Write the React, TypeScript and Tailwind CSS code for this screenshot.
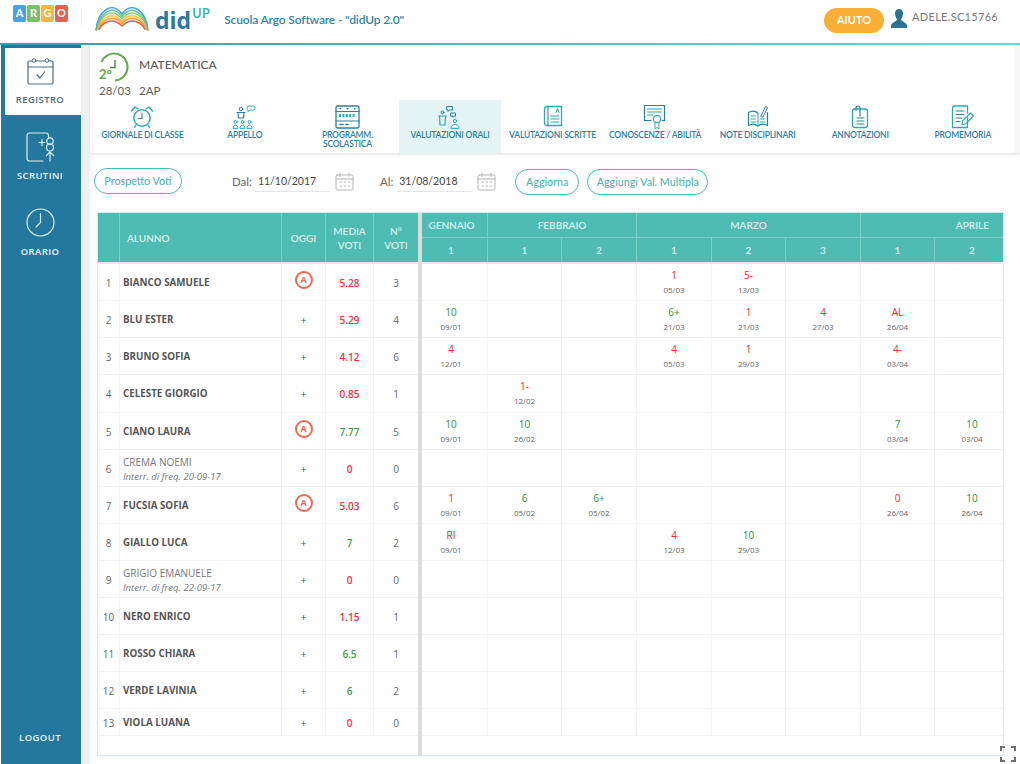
type Mark = { col: number; v: string; d: string; ok?: boolean };
type Row = {
  n: number;
  name: string;
  note?: string;
  absent?: boolean;
  avg: string;
  good?: boolean;
  count: number;
  h: number;
  marks: Mark[];
};

const rows: Row[] = [
  { n: 1, name: "BIANCO SAMUELE", absent: true, avg: "5.28", count: 3, h: 37, marks: [{ col: 3, v: "1", d: "05/03" }, { col: 4, v: "5-", d: "13/03" }] },
  { n: 2, name: "BLU ESTER", avg: "5.29", count: 4, h: 37, marks: [{ col: 0, v: "10", d: "09/01", ok: true }, { col: 3, v: "6+", d: "21/03", ok: true }, { col: 4, v: "1", d: "21/03" }, { col: 5, v: "4", d: "27/03" }, { col: 6, v: "AL", d: "26/04" }] },
  { n: 3, name: "BRUNO SOFIA", avg: "4.12", count: 6, h: 37, marks: [{ col: 0, v: "4", d: "12/01" }, { col: 3, v: "4", d: "05/03" }, { col: 4, v: "1", d: "29/03" }, { col: 6, v: "4-", d: "03/04" }] },
  { n: 4, name: "CELESTE GIORGIO", avg: "0.85", count: 1, h: 38, marks: [{ col: 1, v: "1-", d: "12/02" }] },
  { n: 5, name: "CIANO LAURA", absent: true, avg: "7.77", good: true, count: 5, h: 37, marks: [{ col: 0, v: "10", d: "09/01", ok: true }, { col: 1, v: "10", d: "26/02", ok: true }, { col: 6, v: "7", d: "03/04", ok: true }, { col: 7, v: "10", d: "03/04", ok: true }] },
  { n: 6, name: "CREMA NOEMI", note: "Interr. di freq. 20-09-17", avg: "0", count: 0, h: 37, marks: [] },
  { n: 7, name: "FUCSIA SOFIA", absent: true, avg: "5.03", count: 6, h: 37, marks: [{ col: 0, v: "1", d: "09/01" }, { col: 1, v: "6", d: "05/02", ok: true }, { col: 2, v: "6+", d: "05/02", ok: true }, { col: 6, v: "0", d: "26/04" }, { col: 7, v: "10", d: "26/04", ok: true }] },
  { n: 8, name: "GIALLO LUCA", avg: "7", good: true, count: 2, h: 37, marks: [{ col: 0, v: "RI", d: "09/01" }, { col: 3, v: "4", d: "12/03" }, { col: 4, v: "10", d: "29/03", ok: true }] },
  { n: 9, name: "GRIGIO EMANUELE", note: "Interr. di freq. 22-09-17", avg: "0", count: 0, h: 37, marks: [] },
  { n: 10, name: "NERO ENRICO", avg: "1.15", count: 1, h: 37, marks: [] },
  { n: 11, name: "ROSSO CHIARA", avg: "6.5", good: true, count: 1, h: 37, marks: [] },
  { n: 12, name: "VERDE LAVINIA", avg: "6", good: true, count: 2, h: 37, marks: [] },
  { n: 13, name: "VIOLA LUANA", avg: "0", count: 0, h: 27, marks: [] },
];

const colWidths = ["w-[66px] pr-[7px]", "w-[74px]", "w-[75px]", "w-[75px]", "w-[74px]", "w-[75px]", "w-[74px]", "w-[67px] pl-[7px]"];
const subNumbers = ["1", "1", "2", "1", "2", "3", "1", "2"];

function Svg({ w, h, children, className }: { w: number; h: number; children: React.ReactNode; className?: string }) {
  return (
    <svg width={w} height={h} viewBox={`0 0 ${w} ${h}`} fill="none" strokeLinecap="round" strokeLinejoin="round" className={className}>
      {children}
    </svg>
  );
}

function Rainbow() {
  const colors = ["#3f9fd0", "#53bfb4", "#8cc763", "#f5c33b", "#f39a3d", "#e8604c"];
  return (
    <Svg w={54} h={28}>
      {colors.map((c, i) => (
        <path
          key={c}
          d={`M${1 + i * 0.7} ${27 - i * 0.2} C${3 + i * 0.7} ${8 + i * 2.5} ${17} ${-3 + i * 3.2} 27 ${11 + i * 2.4} C37 ${-3 + i * 3.2} ${51 - i * 0.7} ${8 + i * 2.5} ${53 - i * 0.7} ${27 - i * 0.2}`}
          stroke={c}
          strokeWidth={1.5}
        />
      ))}
    </Svg>
  );
}

function NavIcon({ name }: { name: string }) {
  const a = "#2fa9b5";
  const b = "#2b7f9e";
  if (name === "alarm")
    return (
      <Svg w={24} h={24}>
        <circle cx="12" cy="13" r="8.2" stroke={a} strokeWidth="1.4" />
        <path d="M12 8v5.5H8.5" stroke={b} strokeWidth="1.1" />
        <path d="M1.5 6 5 2l3 2M22.5 6 19 2l-3 2M6 20l-1.5 2.5M18 20l1.5 2.5" stroke={a} strokeWidth="1.4" />
      </Svg>
    );
  if (name === "people")
    return (
      <Svg w={26} h={24}>
        <circle cx="9" cy="4" r="1.8" stroke={b} />
        <path d="M5 7.5h8M6 7.5 6.5 13h5l.5-5.5" stroke={b} strokeWidth="1.2" />
        <path d="M15 2.5c0-1 1-1.5 2-1.5h4c1 0 2 .5 2 1.5v1c0 1-1 1.5-2 1.5h-3l-2 1.5V5c-.6-.3-1-.7-1-1.5z" stroke={a} />
        <circle cx="3.5" cy="17" r="1.5" stroke={a} />
        <circle cx="10.5" cy="17" r="1.5" stroke={a} />
        <circle cx="17.5" cy="17" r="1.5" stroke={a} />
        <path d="M1 23c0-4 5-4 5 0zM8 23c0-4 5-4 5 0zM15 23c0-4 5-4 5 0z" stroke={a} />
      </Svg>
    );
  if (name === "abacus")
    return (
      <Svg w={25} h={24}>
        <rect x="1" y="1" width="23" height="22" rx="1.5" stroke={b} strokeWidth="1.3" />
        <path d="M1 6.5h23M1 16h23" stroke={b} />
        <path d="M4 10.5h17" stroke={a} strokeWidth="3" strokeDasharray="2 1.4" strokeLinecap="butt" />
        <path d="M5 3.8h.5M12.3 3.8h.5M19.5 3.8h.5M5 19.5h3M11 19.5h2" stroke={b} strokeWidth="1.6" />
      </Svg>
    );
  if (name === "oral")
    return (
      <Svg w={26} h={24}>
        <circle cx="5.5" cy="7.5" r="1.5" stroke={b} />
        <path d="M1.5 11h8M2.5 11 3 20h5l.5-9" stroke={a} strokeWidth="1.2" />
        <path d="M10 1.5h5.5v3.5h-3L11 6.5V5h-1zM14 8h4.5v3.2H17l-1 1.2v-1.2h-2z" stroke={b} />
        <circle cx="18" cy="16" r="1.6" stroke={a} />
        <path d="M14 23c0-5 8-5 8 0z" stroke={a} />
      </Svg>
    );
  if (name === "book")
    return (
      <Svg w={20} h={24}>
        <path d="M4 1.5h14.5v19H4C2.5 20.5 1.5 19.5 1.5 18V4C1.5 2.5 2.5 1.5 4 1.5z" stroke={a} strokeWidth="1.3" />
        <path d="M5 1.5v19" stroke={b} />
        <path d="M8 11h8M8 14h8M8 17h8" stroke={a} />
        <path d="M13 7.5l1.5-4 1.5 4" stroke={b} strokeWidth=".9" />
      </Svg>
    );
  if (name === "cert")
    return (
      <Svg w={24} h={26}>
        <path d="M8 16.5H1.5v-15h20v15H19" stroke={b} strokeWidth="1.2" />
        <path d="M4.500 5h14M4.500 8h14M4.500 11h6" stroke={a} />
        <circle cx="14" cy="15" r="3.6" stroke={a} strokeWidth="1.2" />
        <path d="M12 18.500V25l2-1.500 2 1.500v-6.500" stroke={a} />
      </Svg>
    );
  if (name === "note")
    return (
      <Svg w={24} h={24}>
        <path d="M12 8C9 5.500 5 6 2.500 7.500v13c2.500-1.500 6.500-2 9.500.5 3-2.500 7-2 9.500-.5v-13" stroke={b} strokeWidth="1.2" />
        <path d="M12 8v13M5 11h4.500M5 14h4.500M5 17h4.500M14.500 14h4.500M14.500 17h4.500" stroke={a} />
        <path d="M15 11 19.500 1.500l2 1L17 12z" stroke={b} />
      </Svg>
    );
  if (name === "clip")
    return (
      <Svg w={18} h={24}>
        <rect x="1.5" y="4" width="15" height="18.5" rx="2.5" stroke={a} strokeWidth="1.3" />
        <path d="M5 5.500V2.500C5 1.500 6 1 7 1s2 .5 2 1.500V11" stroke={b} strokeWidth="1.2" />
        <path d="M6 13h7M6 16h7M6 19h7" stroke={b} />
      </Svg>
    );
  return (
    <Svg w={24} h={24}>
      <path d="M16.500 13v9.500h-15V3.500C1.500 2 2.500 1 4 1h12.500v7" stroke={a} strokeWidth="1.3" />
      <path d="M5 6h8M5 9.500h8M5 13h6M5 16.500h4" stroke={b} />
      <path d="M11 19.500l.5-3.500L19.500 8l3 3-8 8z" stroke={a} strokeWidth="1.1" />
    </Svg>
  );
}

const navItems = [
  { icon: "alarm", label: "GIORNALE DI CLASSE" },
  { icon: "people", label: "APPELLO" },
  { icon: "abacus", label: "PROGRAMM. SCOLASTICA", two: true },
  { icon: "oral", label: "VALUTAZIONI ORALI", active: true },
  { icon: "book", label: "VALUTAZIONI SCRITTE" },
  { icon: "cert", label: "CONOSCENZE / ABILITÀ" },
  { icon: "note", label: "NOTE DISCIPLINARI" },
  { icon: "clip", label: "ANNOTAZIONI" },
  { icon: "memo", label: "PROMEMORIA" },
];

function CalendarIcon() {
  return (
    <Svg w={19} h={19}>
      <rect x="1" y="3" width="17" height="15" rx="1.5" stroke="#b5b5b5" />
      <path d="M1 7h17M5 1v3.500M14 1v3.500" stroke="#b5b5b5" />
      <path d="M5 10h1.500M9 10h1.500M13 10h1.500M5 14h1.500M9 14h1.500M13 14h1.500" stroke="#b5b5b5" />
    </Svg>
  );
}

function OutlineButton({ label, width }: { label: string; width: string }) {
  return (
    <button className={`${width} h-[26px] rounded-full border-[1.5px] border-[#4dbdb5] bg-white text-[10.7px] font-medium text-[#4fb7ae]`}>
      {label}
    </button>
  );
}

function SideItem({ label, active, icon }: { label: string; active?: boolean; icon: React.ReactNode }) {
  return (
    <div className={`flex flex-col items-center ${active ? "ml-1 h-[67px] bg-white pr-[6px] pt-[9px] text-[#4c6a7c]" : "h-[76px] pr-[2px] pt-[17px] text-[#e6f1f5]"}`}>
      <div className={active ? "h-[28px]" : "h-[30px]"}>{icon}</div>
      <span className={`${active ? "mt-[8px]" : "mt-[7px]"} font-['Open_Sans',sans-serif] text-[9.5px] font-semibold tracking-[0.4px]`}>{label}</span>
    </div>
  );
}

function HeadCell({ className, children }: { className: string; children: React.ReactNode }) {
  return (
    <div className={`flex items-center justify-center border-r border-[#7ecdc6] text-center text-[10px] font-semibold leading-[14px] text-[#d6efec] ${className}`}>
      {children}
    </div>
  );
}

function AbsentBadge() {
  return (
    <span className="mt-[-6px] flex h-[18px] w-[18px] items-center justify-center rounded-full border-2 border-[#ec6a4f] text-[9px] font-bold text-[#ec6a4f]">
      A
    </span>
  );
}

export default function App() {
  return (
    <div className="flex h-[764px] w-[1020px] flex-col overflow-hidden bg-white font-['Lato',sans-serif]">
      <header className="flex h-[43px] shrink-0 items-center pl-[13px] pr-[22px]">
        <div className="flex gap-[1px] pb-[17px] pt-[1px]">
          {[
            ["A", "bg-[#4aa3e0]"],
            ["R", "bg-[#7cc06a]"],
            ["G", "bg-[#f6b73c]"],
            ["O", "bg-[#e8604c]"],
          ].map(([l, c]) => (
            <span key={l} className={`flex h-[17px] w-[13px] items-center justify-center rounded-[2px] text-[11px] font-bold text-white ${c}`}>
              {l}
            </span>
          ))}
        </div>
        <div className="ml-[13px] mb-[10px] h-[16px] w-px bg-[#eeeeee]" />
        <div className="ml-[13px] mb-[10px]">
          <Rainbow />
        </div>
        <div className="ml-[6px] mt-[2px] mb-[4px] flex items-start">
          <span className="font-['Open_Sans',sans-serif] text-[23px] font-bold leading-none text-[#2a7a9f]">did</span>
          <span className="ml-[1px] mt-[-2px] text-[12.5px] font-bold leading-[14px] tracking-[0.5px] text-[#3fb5bd]">UP</span>
        </div>
        <span className="ml-[14px] mb-[3px] text-[12px] font-semibold tracking-[-0.15px] text-[#2a86a3]">Scuola Argo Software - "didUp 2.0"</span>
        <button className="ml-auto mb-[3px] h-[25px] w-[60px] rounded-full bg-[#f9ae36] text-[11px] font-bold text-white">AIUTO</button>
        <svg width="16" height="19" viewBox="0 0 16 19" className="ml-[7px] mb-[6px]">
          <path d="M8 0c2.600 0 4 2 4 4.500S10.800 9 10 10.500c0 1.500 5.500 3 6 6V19H0v-2.500c.5-3 6-4.500 6-6C5.200 9 4 7 4 4.500S5.400 0 8 0z" fill="#2b7396" />
        </svg>
        <span className="ml-[5px] mb-[8px] text-[11px] tracking-[0.3px] text-[#777777]">ADELE.SC15766</span>
      </header>
      <div className="h-[2px] shrink-0 bg-gradient-to-r from-[#3d9bb0] to-[#5fdcd4]" />

      <div className="flex min-h-0 flex-1">
        <aside className="ml-px flex w-[80px] shrink-0 flex-col bg-[#24789e] pt-[3px]">
          <SideItem
            label="REGISTRO"
            active
            icon={
              <Svg w={27} h={28}>
                <rect x="1" y="4" width="25" height="23" rx="1.5" stroke="#4c6a7c" strokeWidth="1.2" />
                <path d="M1 10h25" stroke="#4c6a7c" />
                <circle cx="7" cy="3.5" r="1.8" stroke="#4c6a7c" fill="#fff" />
                <circle cx="20" cy="3.5" r="1.8" stroke="#4c6a7c" fill="#fff" />
                <path d="m10 18 3 3 4.500-6" stroke="#4c6a7c" strokeWidth="1.2" />
              </Svg>
            }
          />
          <SideItem
            label="SCRUTINI"
            icon={
              <svg width="29" height="30" viewBox="0 0 29 30" fill="none" stroke="#dcebf1" strokeWidth="1.2" strokeLinecap="round" strokeLinejoin="round">
                <path d="M17 29H3.500C2 29 1 28 1 26.500V3.500C1 2 2 1 3.500 1H20c1.500 0 2.500 1 2.500 2.500V6" />
                <path d="M13 10.500h6M16 7.500v6" />
                <circle cx="24" cy="9" r="3.200" />
                <circle cx="24" cy="15.500" r="3.500" />
                <path d="M24 29v-9M20.500 23.500l3.500-3.500 3.500 3.500" />
              </svg>
            }
          />
          <SideItem
            label="ORARIO"
            icon={
              <svg width="29" height="29" viewBox="0 0 29 29" fill="none" stroke="#dcebf1" strokeWidth="1.2" strokeLinecap="round">
                <circle cx="14.5" cy="14.5" r="13.5" />
                <path d="M14.500 5.500v9L10 19" />
              </svg>
            }
          />
          <div className="mt-auto pb-[19px] pr-[2px] text-center font-['Open_Sans',sans-serif] text-[9.5px] font-semibold tracking-[0.4px] text-[#e6f1f5]">LOGOUT</div>
        </aside>
        <div className="w-[9px] shrink-0 bg-[#f0f0f0]" />

        <main className="relative flex min-w-0 flex-1 flex-col">
          <section className="flex h-[108px] shrink-0 flex-col border-r-[6px] border-[#f6f6f6] pl-[1px] shadow-[0_2px_2px_rgba(0,0,0,0.09)]">
            <div className="flex h-[55px] pl-[8px] pt-[7px] text-[#5b5b5b]">
              <div className="w-[40px]">
                <svg width="30" height="30" viewBox="0 0 30 30" fill="none" stroke="#63ab4b" strokeWidth="2" className="overflow-visible">
                  <path d="M2.500 10A13.500 13.500 0 1 1 16 28.500" />
                  <path d="M16 8v7.500h-5" strokeWidth="1.4" stroke="#4d8a3b" />
                  <text x="0" y="27" fill="#63ab4b" stroke="none" fontSize="13" fontWeight="700" fontFamily="Lato, sans-serif">2°</text>
                </svg>
              </div>
              <div className="pt-[3px] text-[12px] font-medium leading-[20px]">MATEMATICA</div>
            </div>
            <div className="flex h-[0px] pl-[8px] text-[11.5px] leading-[14px] text-[#5b5b5b]">
              <span className="mt-[-16px] w-[40px]">28/03</span>
              <span className="mt-[-16px]">2AP</span>
            </div>
            <nav className="mt-0 flex h-[53px]">
              {navItems.map((item) => (
                <div key={item.label} className={`flex min-w-0 flex-1 flex-col items-center pt-[4px] ${item.active ? "bg-[#e4f3f3]" : ""}`}>
                  <div className="flex h-[25px] items-center">
                    <NavIcon name={item.icon} />
                  </div>
                  <span className={`${item.two ? "w-[60px]" : "whitespace-nowrap"} mt-[2px] text-center text-[8.5px] font-semibold leading-[9px] tracking-[-0.2px] text-[#2b7f9e]`}>
                    {item.label}
                  </span>
                </div>
              ))}
            </nav>
          </section>

          <div className="flex h-[59px] shrink-0 items-start pl-[4px] pt-[15px]">
            <OutlineButton label="Prospetto Voti" width="w-[88px]" />
            <label className="ml-[50px] mt-[5px] text-[11.5px] text-[#666666]">Dal:</label>
            <span className="ml-[3px] w-[75px] border-b border-[#e3e6e8] pb-[1px] pl-[3px] pt-[6px] text-[10.5px] text-[#444444]">11/10/2017</span>
            <span className="ml-[5px] mt-[4px]"><CalendarIcon /></span>
            <label className="ml-[26px] mt-[5px] text-[11.5px] text-[#666666]">Al:</label>
            <span className="ml-[4px] w-[75px] border-b border-[#e3e6e8] pb-[1px] pl-[2px] pt-[6px] text-[10.5px] text-[#444444]">31/08/2018</span>
            <span className="ml-[5px] mt-[4px]"><CalendarIcon /></span>
            <span className="ml-[19px]"><OutlineButton label="Aggiorna" width="w-[64px]" /></span>
            <span className="ml-[8px]"><OutlineButton label="Aggiungi Val. Multipla" width="w-[121px]" /></span>
          </div>

          <div className="ml-[7px] flex h-[544px] w-[907px] shrink-0 border border-[#d9e9f2]">
            <div className="w-[324px] shrink-0 border-r-[4px] border-[#dcdcdc]">
              <div className="flex h-[49px] bg-[#4fbcb4]">
                <HeadCell className="w-[22px]"> </HeadCell>
                <HeadCell className="w-[162px] !justify-start pl-[7px]">ALUNNO</HeadCell>
                <HeadCell className="w-[44px]">OGGI</HeadCell>
                <HeadCell className="w-[48px]">MEDIA<br />VOTI</HeadCell>
                <HeadCell className="w-[44px] border-r-0">N°<br />VOTI</HeadCell>
              </div>
              <div className="h-[2px] bg-[#e8e8e8]" />
              {rows.map((r) => (
                <div key={r.n} style={{ height: r.h }} className="flex border-b border-[#f0f2f4] font-['Open_Sans',sans-serif] text-[10px] text-[#666666]">
                  <div className="flex w-[22px] items-center justify-center border-r border-[#f0f2f4] pt-[2px]">{r.n}</div>
                  <div className="flex w-[162px] flex-col justify-center border-r border-[#f0f2f4] pl-[3px] pt-[2px]">
                    {r.note ? (
                      <>
                        <span className="leading-[14px] text-[#777777]">{r.name}</span>
                        <span className="text-[9.5px] italic leading-[15px] text-[#777777]">{r.note}</span>
                      </>
                    ) : (
                      <span className="text-[9.8px] font-bold text-[#555555]">{r.name}</span>
                    )}
                  </div>
                  <div className="flex w-[44px] items-center justify-center border-r border-[#f0f2f4] pt-[2px] text-[#555555]">
                    {r.absent ? <AbsentBadge /> : "+"}
                  </div>
                  <div className={`flex w-[48px] items-center justify-center border-r border-[#f0f2f4] pt-[2px] font-semibold ${r.good ? "text-[#3f9f45]" : "text-[#f0304a]"}`}>
                    {r.avg}
                  </div>
                  <div className="flex w-[44px] items-center justify-center pt-[2px]">{r.count}</div>
                </div>
              ))}
            </div>

            <div className="min-w-0 flex-1">
              <div className="flex h-[25px] bg-[#4fbcb4] text-[10px] font-semibold text-[#d6efec]">
                <div className="flex w-[66px] items-center justify-center border-b border-r border-[#7ecdc6] pr-[6px]">GENNAIO</div>
                <div className="flex w-[149px] items-center justify-center border-b border-r border-[#7ecdc6]">FEBBRAIO</div>
                <div className="flex w-[224px] items-center justify-center border-r border-b border-[#7ecdc6]">MARZO</div>
                <div className="flex flex-1 items-center justify-end border-b border-[#7ecdc6] pr-[14px]">APRILE</div>
              </div>
              <div className="flex h-[24px] bg-[#4fbcb4] text-[10px] font-semibold text-[#d6efec]">
                {subNumbers.map((n, i) => (
                  <div key={i} className={`flex items-center justify-center border-r border-[#7ecdc6] last:border-r-0 ${colWidths[i]}`}>{n}</div>
                ))}
              </div>
              <div className="h-[2px] bg-[#e8e8e8]" />
              {rows.map((r) => (
                <div key={r.n} style={{ height: r.h }} className="flex border-b border-[#f0f2f4]">
                  {colWidths.map((w, i) => {
                    const mark = r.marks.find((m) => m.col === i);
                    return (
                      <div key={i} className={`flex flex-col items-center border-r border-[#f0f2f4] pt-[4px] font-['Open_Sans',sans-serif] last:border-r-0 ${w}`}>
                        {mark && (
                          <>
                            <span className={`text-[10px] font-medium leading-[14px] ${mark.ok ? "text-[#2f8f3a]" : "text-[#f2282f]"}`}>{mark.v}</span>
                            <span className="text-[8px] leading-[15px] text-[#666666]">{mark.d}</span>
                          </>
                        )}
                      </div>
                    );
                  })}
                </div>
              ))}
            </div>
          </div>

          <svg width="16" height="16" viewBox="0 0 16 16" fill="none" stroke="#6f6f6f" strokeWidth="2" className="absolute bottom-[2px] right-[4px]">
            <path d="M1 5V1h4M11 1h4v4M15 11v4h-4M5 15H1v-4" />
          </svg>
        </main>
      </div>
    </div>
  );
}
